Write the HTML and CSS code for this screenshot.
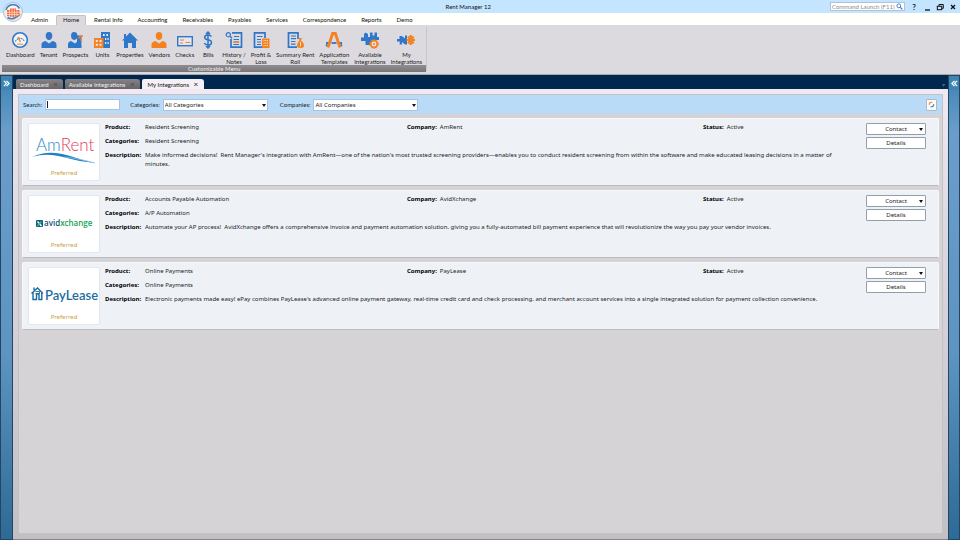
FILE: index.html
```html
<!DOCTYPE html>
<html lang="en">
<head>
    <meta charset="UTF-8">
    <title>Rent Manager 12</title>
    <link rel="stylesheet" href="styles.css">
</head>
<body>
    <header class="titlebar">
        <button class="app-logo" aria-label="Application menu">
            <svg viewBox="0 0 20 20">
                <circle cx="10" cy="10" r="9.5" fill="#e9e9ee" stroke="#a9b4c2" stroke-width="0.8"/>
                <circle cx="10" cy="10" r="7.5" fill="#f6f4f4"/>
                <path d="M3 8a7.4 7.4 0 0 1 13.5-1.5" fill="none" stroke="#3b80c4" stroke-width="1.6"/>
                <path d="M4.5 15.5c4 2.5 9 1 12.5-3.5" fill="none" stroke="#3b80c4" stroke-width="1.6"/>
                <path d="M4 8h3V6.5h6V8h3.5v6l-6 1.2L4 14z" fill="#f36a3a"/>
                <path d="M6.5 8v6.5M9 6.5V15M11.5 6.5V15M14 8v6M4 10.3h12.5M4 12.5h12.5" stroke="#fbe3da" stroke-width="0.7"/>
            </svg>
        </button>
        <h1>Rent Manager 12</h1>
        <div class="title-tools">
            <div class="launch">
                <input type="text" placeholder="Command Launch (F11)" aria-label="Command Launch">
                <svg viewBox="0 0 8 8"><circle cx="3.2" cy="3.2" r="2.2" fill="#fff" stroke="#2f74cf"/><path d="M5 5l2.3 2.3" stroke="#2f74cf" stroke-width="1.4"/></svg>
            </div>
            <button class="win-btn help" aria-label="Help">?</button>
            <button class="win-btn" aria-label="Minimize"><svg viewBox="0 0 8 8"><path d="M2 7h5" stroke="#111" stroke-width="1.3"/></svg></button>
            <button class="win-btn" aria-label="Restore"><svg viewBox="0 0 8 8"><path d="M3 3V1.5h4.3v3.8H6" fill="none" stroke="#111"/><rect x="1.3" y="3.3" width="4.4" height="3.4" fill="none" stroke="#111"/></svg></button>
            <button class="win-btn" aria-label="Close"><svg viewBox="0 0 8 8"><path d="M2 2l4 4M6 2L2 6" stroke="#111" stroke-width="1.3"/></svg></button>
        </div>
    </header>

    <nav class="menu">
        <a href="#">Admin</a>
        <a href="#" class="active">Home</a>
        <a href="#">Rental Info</a>
        <a href="#">Accounting</a>
        <a href="#">Receivables</a>
        <a href="#">Payables</a>
        <a href="#">Services</a>
        <a href="#">Correspondence</a>
        <a href="#">Reports</a>
        <a href="#">Demo</a>
    </nav>

    <div class="ribbon">
        <div class="ribbon-group">
            <div class="tools">
                <button class="tool">
                    <svg viewBox="0 0 18 18"><circle cx="9" cy="9" r="7.3" fill="#f4f4f8" stroke="#2f77c8" stroke-width="1.6"/><path d="M4.5 10.5a4.8 4.8 0 0 1 9 0" fill="none" stroke="#2f77c8" stroke-width="1.1" stroke-dasharray="1.5 0.8"/><path d="M7 6l2.5 5" stroke="#f58220" stroke-width="1.4"/><path d="M6 13.2h6" stroke="#f58220"/></svg>
                    <span>Dashboard</span>
                </button>
                <button class="tool">
                    <svg viewBox="0 0 18 18" fill="#2f77c8"><path d="M9 1c2.3 0 3.3 1.5 3.3 3.7C12.3 7 11 9 9 9S5.7 7 5.7 4.7C5.7 2.5 6.7 1 9 1z"/><path d="M1.5 17v-3.5c0-2 1.5-3 4-3.5L9 12.5 12.5 10c2.5.5 4 1.5 4 3.5V17z"/></svg>
                    <span>Tenant</span>
                </button>
                <button class="tool">
                    <svg viewBox="0 0 18 18"><path d="M8 1c2.3 0 3.5 1.6 3.5 3.8C11.5 7 10.3 9 8.3 9 6 9 5 7 5 4.8 5 2.5 6 1 8 1zM2 17v-3.5c0-2 1-3 3-3.5l4 2.5L12 10c2.5.5 3.5 1.5 3.5 3.5V17z" fill="#2f77c8"/><path d="M11 4.5h4.5V12H11z" fill="#2f77c8"/><path d="M12.5 7.5l2-2.5H17M15 7v3" fill="none" stroke="#f58220" stroke-width="1.3"/></svg>
                    <span>Prospects</span>
                </button>
                <button class="tool">
                    <svg viewBox="0 0 18 18"><path d="M8 1h9v16H8z" fill="#2f77c8"/><path d="M1 7h9.5v10H1z" fill="#f58220"/><path d="M10 3h1.7v2H10zM13.3 3H15v2h-1.7zM12 7h1.3v2H12zM14.5 7h1.2v2h-1.2zM12 11h1.3v2H12zM14.5 11h1.2v2h-1.2zM2.8 9h2v2h-2zM6.5 9h2v2h-2zM2.8 12.7h2v2h-2zM6.5 12.7h2v2h-2z" fill="#e9e7ec"/></svg>
                    <span>Units</span>
                </button>
                <button class="tool">
                    <svg viewBox="0 0 18 18"><path d="M9 1.5L17 9.5h-2V17h-4v-5H7v5H3V9.5H1z" fill="#2f77c8"/><path d="M3 3h2v4H3z" fill="#2f77c8"/></svg>
                    <span>Properties</span>
                </button>
                <button class="tool">
                    <svg viewBox="0 0 18 18" fill="#f58220"><path d="M9 1c2.3 0 3.3 1.5 3.3 3.7C12.3 7 11 9 9 9S5.7 7 5.7 4.7C5.7 2.5 6.7 1 9 1z"/><path d="M1.5 17v-3.5c0-2 1.5-3 4-3.5L9 12.5 12.5 10c2.5.5 4 1.5 4 3.5V17z"/></svg>
                    <span>Vendors</span>
                </button>
                <button class="tool">
                    <svg viewBox="0 0 18 18"><rect x="1.7" y="5.7" width="14.6" height="9" fill="#e6e6ee" stroke="#2f77c8" stroke-width="1.4"/><path d="M4 9h4M4 12h3M9.5 11.5h4.5" stroke="#f58220"/></svg>
                    <span>Checks</span>
                </button>
                <button class="tool">
                    <svg viewBox="0 0 18 18"><path d="M12.5 5.5C11.5 4.3 10.5 4 9 4 7 4 5.7 4.8 5.7 6.4c0 3.3 6.8 1.6 6.8 5 0 1.7-1.5 2.6-3.5 2.6-1.6 0-3-.6-3.8-1.8M9 1v16M7 3l2-2 2 2M7 15l2 2 2-2" fill="none" stroke="#2f77c8" stroke-width="1.5"/></svg>
                    <span>Bills</span>
                </button>
                <button class="tool">
                    <svg viewBox="0 0 18 18"><path d="M7 1.8h9.5v14.4H6V8" fill="none" stroke="#2f77c8" stroke-width="1.7"/><path d="M9 5.5h5M8.5 8.5H14M8.5 11H14M8.5 13.5H14" stroke="#2f77c8" stroke-width="1.2"/><circle cx="3.3" cy="3.7" r="2.1" fill="none" stroke="#2f77c8" stroke-width="1.2"/><path d="M5 5.3l2 2" stroke="#2f77c8" stroke-width="1.4"/><path d="M8.5 11H14" stroke="#f58220" stroke-width="1.2"/></svg>
                    <span>History /<br>Notes</span>
                </button>
                <button class="tool">
                    <svg viewBox="0 0 18 18"><path d="M10 16.2H2.5V1.8H13V7" fill="none" stroke="#2f77c8" stroke-width="1.7"/><path d="M5 5.5h5.5M5 8.5h4M5 11h4M5 13.5h4" stroke="#2f77c8" stroke-width="1.2"/><path d="M10 7.5h7.5V17H10z" fill="#f58220"/><path d="M11.5 9.5H16M11.5 12H16M11.5 14.5H16" stroke="#f9dcc2" stroke-width="1.1" stroke-dasharray="1.1 0.6"/></svg>
                    <span>Profit &amp;<br>Loss</span>
                </button>
                <button class="tool">
                    <svg viewBox="0 0 18 18"><path d="M11 16.2H2.5V1.8H12V8" fill="none" stroke="#2f77c8" stroke-width="1.7"/><path d="M5 5h5M5 7.7h5M5 10.5h4.5M5 13.2h4.5" stroke="#2f77c8" stroke-width="1.2"/><path d="M12.5 7H16l-1 2.5c2 1.5 3 3.2 3 5 0 1.7-1 2.5-3.5 2.5S11 16.2 11 14.5c0-1.8.8-3.5 2.5-5z" fill="#f58220"/><path d="M14.5 11v4.5" stroke="#f9dcc2"/></svg>
                    <span>Summary Rent<br>Roll</span>
                </button>
                <button class="tool">
                    <svg viewBox="0 0 18 18"><path d="M1 12h3M14 12h3M2.5 13.5L1 15M15.5 13.5L17 15" stroke="#2f77c8" stroke-width="1.8"/><path d="M7.8 2L3 16.5M10.2 2L15 16.5" stroke="#f58220" stroke-width="2.8"/><path d="M6.5 1h5v3h-5z" fill="#f58220"/><path d="M6.5 12h5" stroke="#2f77c8" stroke-width="1.8"/></svg>
                    <span>Application<br>Templates</span>
                </button>
                <button class="tool">
                    <svg viewBox="0 0 18 18"><path d="M0 6.5h3V3l1.5-1.5L7 3v3h2V1.5h2.5v3h2v-3H16V6h2v3h-3v3H9v2H4.5v-4H0z" fill="#2f77c8"/><circle cx="13" cy="13" r="3.3" fill="#e9e7ec" stroke="#f58220" stroke-width="1.7"/><circle cx="13" cy="13" r="4.4" fill="none" stroke="#f58220" stroke-dasharray="1.5 1.3"/><circle cx="13" cy="13" r="1.1" fill="#f58220"/></svg>
                    <span>Available<br>Integrations</span>
                </button>
                <button class="tool">
                    <svg viewBox="0 0 18 18"><path d="M0 8h2.5V5h2.3L8 7.5v-3h2v9H8L5 11v2.5H2.7v-3H0z" fill="#2f77c8"/><path d="M9.5 9H18M13.8 4v10M11 5.5l5.6 7M16.6 5.5l-5.6 7" stroke="#f58220" stroke-width="2.2"/></svg>
                    <span>My<br>Integrations</span>
                </button>
            </div>
            <div class="group-name">Customizable Menu</div>
        </div>
    </div>

    <div class="workspace">
        <aside class="side"><button class="expand" aria-label="Expand left panel"><svg viewBox="0 0 8 8"><path d="M1 1l3 3-3 3M4 1l3 3-3 3" fill="none" stroke="#fff" stroke-width="1.4"/></svg></button></aside>

        <div class="center">
            <div class="doc-tabs">
                <button class="doc-tab">Dashboard <span class="x">×</span></button>
                <button class="doc-tab">Available Integrations <span class="x">×</span></button>
                <button class="doc-tab current">My Integrations <span class="x">×</span></button>
                <span class="tabs-more">▾</span>
            </div>

            <main class="page">
                <div class="panel">
                    <form class="filters">
                        <label for="search">Search:</label>
                        <span class="search-box"><input type="text" id="search"></span>
                        <label for="categories">Categories:</label>
                        <span class="select-box"><select id="categories"><option>All Categories</option></select></span>
                        <label for="companies">Companies:</label>
                        <span class="select-box"><select id="companies"><option>All Companies</option></select></span>
                        <button type="button" class="refresh" aria-label="Refresh"><svg viewBox="0 0 8 8" fill="none" stroke-width="1.2"><path d="M1.5 4.5A2.5 2.5 0 0 1 5 1.7" stroke="#f58220"/><path d="M6.5 3.5A2.5 2.5 0 0 1 3 6.3" stroke="#2f77c8"/></svg></button>
                    </form>

                    <article class="card">
                        <div class="logo">
                            <svg viewBox="0 0 70 36">
                                <text x="7" y="21" class="amrent"><tspan fill="#2b86cc">Am</tspan><tspan fill="#e8365d">Rent</tspan></text>
                                <path d="M3 27c15-7 27-4 38-1 9 3 16 5 26 7-12-1-21-3-29-5-11-3-22-5-35-1z" fill="#1d80c6"/>
                                <path d="M35 27c10 1 20 3 31 6" fill="none" stroke="#8cc0e4" stroke-width="0.8"/>
                            </svg>
                            <span>Preferred</span>
                        </div>
                        <dl class="info">
                            <div class="row">
                                <div class="pair"><dt>Product:</dt><dd>Resident Screening</dd></div>
                                <div class="pair auto"><dt>Company:</dt><dd>AmRent</dd></div>
                                <div class="pair auto"><dt>Status:</dt><dd>Active</dd></div>
                            </div>
                            <div class="pair"><dt>Categories:</dt><dd>Resident Screening</dd></div>
                            <div class="pair"><dt>Description:</dt><dd>Make informed decisions!&nbsp; Rent Manager's integration with AmRent—one of the nation's most trusted screening providers—enables you to conduct resident screening from within the software and make educated leasing decisions in a matter of minutes.</dd></div>
                        </dl>
                        <div class="actions">
                            <button class="btn menu-btn">Contact</button>
                            <button class="btn">Details</button>
                        </div>
                    </article>

                    <article class="card">
                        <div class="logo">
                            <svg viewBox="0 0 70 36">
                                <rect x="7" y="18" width="7" height="7" rx="1" fill="#0b5c8c"/>
                                <path d="M8.5 19.5l4 4.5" stroke="#fff" stroke-width="1.3"/><path d="M12.5 19.5l-4 4.5" stroke="#4cc26b" stroke-width="1.3"/>
                                <text x="15" y="24" class="avid"><tspan fill="#12507c">avid</tspan><tspan fill="#16a455">xchange</tspan></text>
                            </svg>
                            <span>Preferred</span>
                        </div>
                        <dl class="info">
                            <div class="row">
                                <div class="pair"><dt>Product:</dt><dd>Accounts Payable Automation</dd></div>
                                <div class="pair auto"><dt>Company:</dt><dd>AvidXchange</dd></div>
                                <div class="pair auto"><dt>Status:</dt><dd>Active</dd></div>
                            </div>
                            <div class="pair"><dt>Categories:</dt><dd>A/P Automation</dd></div>
                            <div class="pair"><dt>Description:</dt><dd>Automate your AP process!&nbsp; AvidXchange offers a comprehensive invoice and payment automation solution, giving you a fully-automated bill payment experience that will revolutionize the way you pay your vendor invoices.</dd></div>
                        </dl>
                        <div class="actions">
                            <button class="btn menu-btn">Contact</button>
                            <button class="btn">Details</button>
                        </div>
                    </article>

                    <article class="card">
                        <div class="logo">
                            <svg viewBox="0 0 70 36">
                                <path d="M2.5 19.5L8.500 14l5.5 5.5M4 18.5v7h3.5V20H10v5.5h2.8v-7M5 16v-2.5" fill="none" stroke="#1b6c9f" stroke-width="1.4"/>
                                <path d="M6.5 17.5h4v2h-4" fill="none" stroke="#1b6c9f" stroke-width="0.9"/>
                                <text x="16" y="26" class="paylease" fill="#1b6c9f">PayLease</text>
                            </svg>
                            <span>Preferred</span>
                        </div>
                        <dl class="info">
                            <div class="row">
                                <div class="pair"><dt>Product:</dt><dd>Online Payments</dd></div>
                                <div class="pair auto"><dt>Company:</dt><dd>PayLease</dd></div>
                                <div class="pair auto"><dt>Status:</dt><dd>Active</dd></div>
                            </div>
                            <div class="pair"><dt>Categories:</dt><dd>Online Payments</dd></div>
                            <div class="pair"><dt>Description:</dt><dd>Electronic payments made easy! ePay combines PayLease's advanced online payment gateway, real-time credit card and check processing, and merchant account services into a single integrated solution for payment collection convenience.</dd></div>
                        </dl>
                        <div class="actions">
                            <button class="btn menu-btn">Contact</button>
                            <button class="btn">Details</button>
                        </div>
                    </article>
                </div>
            </main>
        </div>

        <aside class="side"><button class="expand" aria-label="Expand right panel"><svg viewBox="0 0 8 8"><path d="M4 1L1 4l3 3M7 1L4 4l3 3" fill="none" stroke="#fff" stroke-width="1.4"/></svg></button></aside>
    </div>
</body>
</html>
```

FILE: styles.css
```css
* {
    box-sizing: border-box;
}

body {
    margin: 0;
    min-height: 100vh;
    display: flex;
    flex-direction: column;
    background: #dddadf;
    color: #1c1c1c;
    font-family: Lato, "Noto Sans", sans-serif;
    font-size: 6px;
    line-height: 8px;
}

button, input, select {
    font: inherit;
    color: inherit;
    margin: 0;
    padding: 0;
    border: 0;
    background: none;
}

svg {
    display: block;
}

/* title bar */
.titlebar {
    position: relative;
    display: grid;
    grid-template-columns: 19fr auto 20fr;
    align-items: center;
    height: 13px;
    background: #c3e5ff;
}

.app-logo {
    position: absolute;
    left: 3px;
    top: 2px;
    width: 20px;
    height: 20px;
}

.titlebar h1 {
    grid-column: 2;
    margin: 0;
    font-size: 6px;
    font-weight: normal;
    color: #111;
}

.title-tools {
    display: flex;
    justify-content: flex-end;
    align-items: center;
    gap: 5px;
    padding-right: 3px;
}

.launch {
    display: flex;
    align-items: center;
    width: 75px;
    height: 9px;
    padding: 0 1px;
    background: #fff;
    border: 1px solid #b3c3d3;
}

.launch input {
    flex: 1;
    min-width: 0;
    height: 7px;
    outline: none;
}

.launch input::placeholder {
    color: #8b8b8b;
}

.launch svg {
    width: 7px;
    height: 7px;
}

.win-btn {
    width: 8px;
    height: 8px;
}

.help {
    font-size: 8px;
    font-weight: bold;
}

/* menu */
.menu {
    display: flex;
    gap: 1px;
    height: 12px;
    padding: 2px 0 0 24px;
    background: #fffffb;
}

.menu a {
    padding: 1px 7px 0;
    color: #111;
    text-decoration: none;
}

.menu .active {
    background: #dddadf;
    border: 1px solid #c4c0c6;
    border-bottom: 0;
    border-radius: 2px 2px 0 0;
    padding: 0 6px;
}

/* ribbon */
.ribbon {
    display: flex;
    height: 50px;
    padding: 2px 2px 3px;
    border-bottom: 1px solid #a9a6ac;
}

.ribbon-group {
    display: flex;
    flex-direction: column;
    border-right: 1px solid #c6c3c9;
}

.tools {
    display: flex;
    flex: 1;
    gap: 5px;
    padding: 4px 4px 0;
}

.tool {
    display: flex;
    flex-direction: column;
    align-items: center;
    line-height: 7px;
    color: #222;
}

.tool svg {
    width: 18px;
    height: 18px;
    margin-bottom: 2px;
}

.group-name {
    height: 7px;
    line-height: 7px;
    background: linear-gradient(#8f8d90, #767477);
    color: #f1f1f1;
    text-align: center;
}

/* workspace */
.workspace {
    flex: 1;
    display: grid;
    grid-template-columns: 13px 1fr 12px;
}

.side {
    background: linear-gradient(#3d83b3, #6b9dcb 12%, #5d94c2 60%, #2e6a96);
    border: 1px solid #26445f;
}

.expand {
    display: flex;
    align-items: center;
    justify-content: center;
    width: 100%;
    height: 14px;
    background: #3b84b3;
}

.expand svg {
    width: 7px;
    height: 7px;
}

.center {
    display: flex;
    flex-direction: column;
}

.doc-tabs {
    display: flex;
    align-items: flex-end;
    gap: 2px;
    height: 14px;
    padding: 0 3px;
    background: #00284f;
}

.doc-tab {
    height: 10px;
    padding: 0 5px 0 4px;
    background: linear-gradient(#858386, #666467);
    color: #f4f4f4;
    border-radius: 2px 3px 0 0;
}

.doc-tab .x {
    margin-left: 3px;
    color: #4a484b;
    font-size: 8px;
}

.doc-tab.current {
    padding: 0 6px;
    background: #f4f0f6;
    color: #111;
}

.current .x {
    color: #222;
}

.tabs-more {
    margin-left: auto;
    color: #59616c;
}

.page {
    flex: 1;
    display: flex;
    padding: 5px;
    background: linear-gradient(#f0e9f1, #dcd9df 30%, #c2c0c5);
    border-bottom: 1px solid #858589;
}

.panel {
    flex: 1;
    display: flex;
    flex-direction: column;
    gap: 4px;
    background: #d5d3d6;
    border: 1px solid #c3c0c6;
}

/* filters */
.filters {
    display: flex;
    align-items: center;
    height: 19px;
    padding: 0 5px 0 4px;
    background: #badbf8;
}

.filters label {
    margin-right: 3px;
}

.search-box {
    position: relative;
    width: 75px;
    margin-right: 10px;
}

/* text cursor */
.search-box::before {
    content: "";
    position: absolute;
    left: 2px;
    top: 2px;
    width: 1px;
    height: 7px;
    background: #222;
}

.search-box input {
    display: block;
    width: 100%;
    height: 11px;
    padding: 0 2px;
    background: #fff;
    border: 1px solid #a8c3db;
    outline: none;
}

.select-box {
    position: relative;
    width: 105px;
    margin-right: 12px;
}

.select-box select {
    display: block;
    width: 100%;
    height: 12px;
    padding: 0 1px;
    background: #fff;
    border: 1px solid #a8c3db;
    font-family: "Noto Sans", sans-serif;
    appearance: none;
}

.select-box::after,
.menu-btn::after {
    content: "";
    position: absolute;
    right: 2px;
    top: 5px;
    border: 2px solid transparent;
    border-top: 3px solid #111;
    border-bottom: 0;
}

.refresh {
    display: flex;
    align-items: center;
    justify-content: center;
    width: 11px;
    height: 12px;
    margin-left: auto;
    background: #fbfbfb;
    border: 1px solid #b0b8c0;
    border-radius: 1px;
}

.refresh svg {
    width: 7px;
    height: 7px;
}

/* integration cards */
.card {
    display: flex;
    min-height: 68px;
    margin: 0 3px;
    padding: 4px 12px 4px 5px;
    background: #eef2f7;
    border: 1px solid #f7f9fb;
    border-bottom-color: #bdbbc0;
    border-radius: 2px;
    font-family: "Noto Sans", sans-serif;
}

.logo {
    display: flex;
    flex-direction: column;
    align-items: center;
    justify-content: space-between;
    width: 72px;
    height: 58px;
    padding: 6px 0 3px;
    background: #fff;
    border: 1px solid #e3e6eb;
    border-radius: 2px;
    color: #c8a03c;
}

.logo svg {
    width: 70px;
    height: 36px;
}

.amrent {
    font: 300 17px Lato, sans-serif;
}

.avid {
    font: 600 8px "Open Sans", sans-serif;
}

.paylease {
    font: 600 13px Lato, sans-serif;
}

.info {
    flex: 1;
    display: flex;
    flex-direction: column;
    gap: 5px;
    margin: 0;
    padding: 0 14px 0 5px;
    line-height: 9px;
}

.row {
    display: grid;
    grid-template-columns: 302px 296px 1fr;
}

.pair {
    display: flex;
}

dt {
    flex: none;
    width: 40px;
    font-weight: bold;
    color: #000;
}

.auto dt {
    width: auto;
    margin-right: 3px;
}

dd {
    margin: 0;
}

.actions {
    display: flex;
    flex-direction: column;
    gap: 2px;
    width: 60px;
}

.btn {
    position: relative;
    height: 12px;
    background: #fff;
    border: 1px solid #929da6;
    border-radius: 1px;
}

.menu-btn::after {
    top: 4px;
    right: 2px;
    border-width: 3px 2px 0;
}
```
